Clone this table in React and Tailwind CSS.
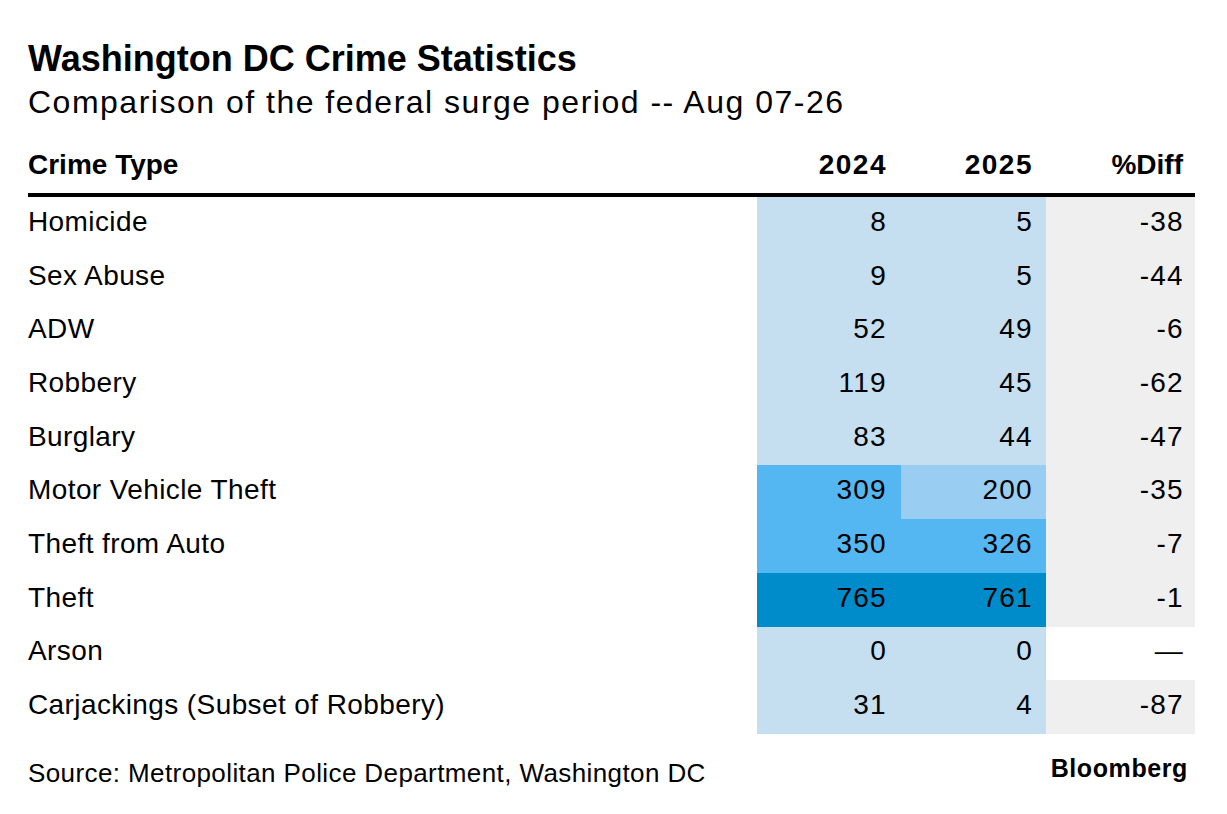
const rows = [
  { name: 'Homicide', a: '8', b: '5', d: '-38', ca: 'bg-[#c5def0]', cb: 'bg-[#c5def0]', cd: 'bg-[#efefef]' },
  { name: 'Sex Abuse', a: '9', b: '5', d: '-44', ca: 'bg-[#c5def0]', cb: 'bg-[#c5def0]', cd: 'bg-[#efefef]' },
  { name: 'ADW', a: '52', b: '49', d: '-6', ca: 'bg-[#c5def0]', cb: 'bg-[#c5def0]', cd: 'bg-[#efefef]' },
  { name: 'Robbery', a: '119', b: '45', d: '-62', ca: 'bg-[#c5def0]', cb: 'bg-[#c5def0]', cd: 'bg-[#efefef]' },
  { name: 'Burglary', a: '83', b: '44', d: '-47', ca: 'bg-[#c5def0]', cb: 'bg-[#c5def0]', cd: 'bg-[#efefef]' },
  { name: 'Motor Vehicle Theft', a: '309', b: '200', d: '-35', ca: 'bg-[#55b7f1]', cb: 'bg-[#99cdf2]', cd: 'bg-[#efefef]' },
  { name: 'Theft from Auto', a: '350', b: '326', d: '-7', ca: 'bg-[#55b7f1]', cb: 'bg-[#55b7f1]', cd: 'bg-[#efefef]' },
  { name: 'Theft', a: '765', b: '761', d: '-1', ca: 'bg-[#008bca]', cb: 'bg-[#008bca]', cd: 'bg-[#efefef]' },
  { name: 'Arson', a: '0', b: '0', d: '—', ca: 'bg-[#c5def0]', cb: 'bg-[#c5def0]', cd: 'bg-white' },
  { name: 'Carjackings (Subset of Robbery)', a: '31', b: '4', d: '-87', ca: 'bg-[#c5def0]', cb: 'bg-[#c5def0]', cd: 'bg-[#efefef]' },
]

export default function App() {
  return (
    <div className="h-[814px] w-[1227px] bg-white font-['Liberation_Sans',Arial,sans-serif] text-black">
      <div className="px-[28px] pt-[39px]">
        <h1 className="text-[36px] font-bold leading-[40px]">Washington DC Crime Statistics</h1>
        <p className="mt-[3px] text-[32px] leading-[40px] tracking-[1.5px]">
          Comparison of the federal surge period -- Aug 07-26
        </p>

        <div className="mt-[27px] w-[1167px]">
          <div className="flex items-center border-b-[4px] border-black pb-[12px] text-[28px] font-bold leading-[32px]">
            <div className="flex-1">Crime Type</div>
            <div className="w-[144px] pr-[14px] text-right tracking-[1.5px]">2024</div>
            <div className="w-[145px] pr-[13px] text-right tracking-[1.5px]">2025</div>
            <div className="w-[149px] pr-[12px] text-right">%Diff</div>
          </div>
          {rows.map((r) => (
            <div key={r.name} className="flex h-[53.7px] items-center text-[28px]">
              <div className="flex h-full flex-1 items-center pb-[4px] tracking-[0.4px]">{r.name}</div>
              <div className={`flex h-full w-[144px] items-center justify-end pb-[4px] pr-[14px] tracking-[1.3px] ${r.ca}`}>
                {r.a}
              </div>
              <div className={`flex h-full w-[145px] items-center justify-end pb-[4px] pr-[13px] tracking-[1.3px] ${r.cb}`}>
                {r.b}
              </div>
              <div className={`flex h-full w-[149px] items-center justify-end pb-[4px] pr-[11px] tracking-[1.3px] ${r.cd}`}>
                {r.d}
              </div>
            </div>
          ))}
        </div>

        <div className="mt-[18px] flex w-[1160px] items-start justify-between">
          <p className="mt-[5px] text-[26px] leading-[32px] tracking-[0.4px]">
            Source: Metropolitan Police Department, Washington DC
          </p>
          <p className="text-[25px] font-bold leading-[32px] tracking-[0.6px]">Bloomberg</p>
        </div>
      </div>
    </div>
  )
}
